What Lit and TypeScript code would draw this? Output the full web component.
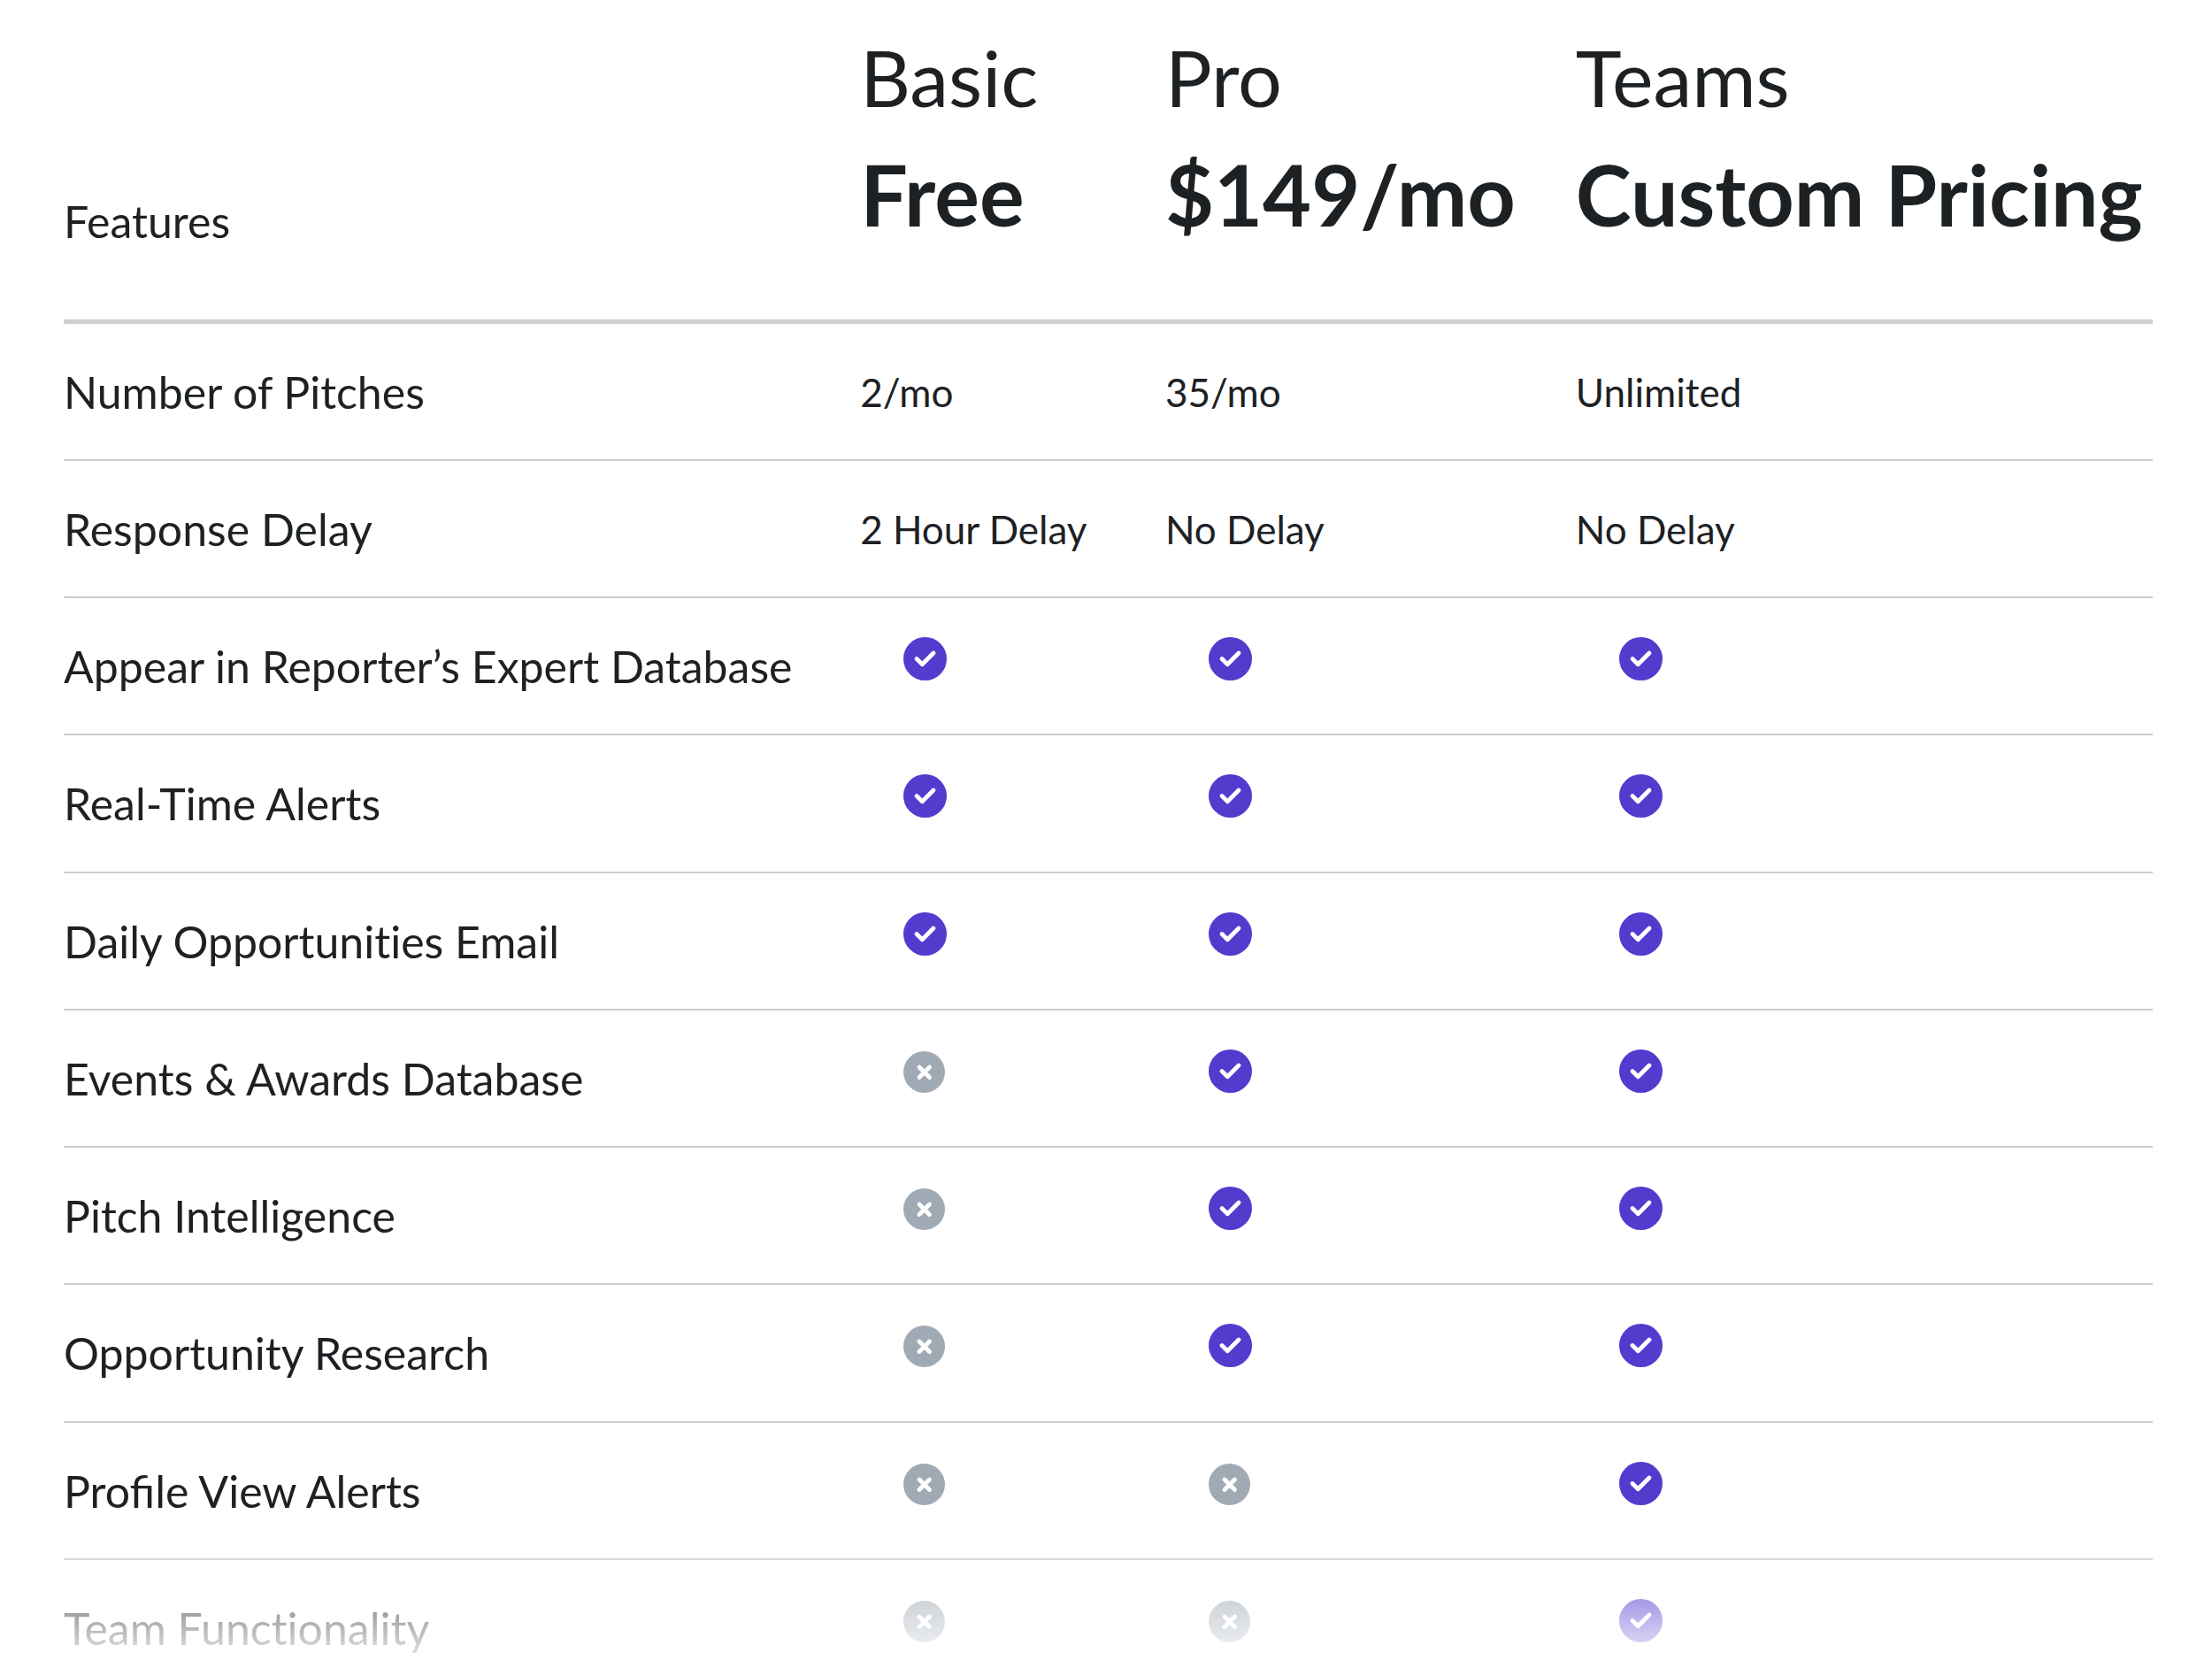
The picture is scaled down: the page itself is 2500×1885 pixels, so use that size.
import { LitElement, html, css, svg } from "lit";
import { customElement } from "lit/decorators.js";
import { classMap } from "lit/directives/class-map.js";

type Cell = string | boolean;
interface Feature {
  name: string;
  cells: Cell[];
}

const PLANS = [
  { name: "Basic", price: "Free" },
  { name: "Pro", price: "$149/mo" },
  { name: "Teams", price: "Custom Pricing" },
];

const FEATURES: Feature[] = [
  { name: "Number of Pitches", cells: ["2/mo", "35/mo", "Unlimited"] },
  { name: "Response Delay", cells: ["2 Hour Delay", "No Delay", "No Delay"] },
  { name: "Appear in Reporter’s Expert Database", cells: [true, true, true] },
  { name: "Real-Time Alerts", cells: [true, true, true] },
  { name: "Daily Opportunities Email", cells: [true, true, true] },
  { name: "Events & Awards Database", cells: [false, true, true] },
  { name: "Pitch Intelligence", cells: [false, true, true] },
  { name: "Opportunity Research", cells: [false, true, true] },
  { name: "Profile View Alerts", cells: [false, false, true] },
  { name: "Team Functionality", cells: [false, false, true] },
];

@customElement("app-root")
export class AppRoot extends LitElement {
  static styles = css`
    :host {
      display: block;
      position: relative;
      box-sizing: border-box;
      height: 100vh;
      overflow: hidden;
      padding: 0 67px 0 72px;
      background: #fff;
      color: #1d2124;
      font-family: Lato, "Liberation Sans", sans-serif;
    }
    table {
      width: 100%;
      border-collapse: separate;
      border-spacing: 0;
      table-layout: fixed;
    }
    .feature-col { width: 38%; }
    .basic-col { width: 14.6%; }
    .pro-col { width: 19.65%; }
    th, td {
      box-sizing: border-box;
      padding: 0 0 0 3px;
      text-align: left;
      font-weight: 400;
      white-space: nowrap;
    }
    thead th {
      height: 366px;
      border-bottom: 5px solid #d0d0d0;
      vertical-align: top;
      padding-top: 21px;
    }
    thead .corner {
      vertical-align: bottom;
      padding: 0 0 79px;
      font-size: 50px;
      line-height: 64px;
    }
    .plan, .price { display: block; line-height: 132px; }
    .plan { font-size: 88px; }
    .price { font-size: 95px; font-weight: 700; }
    tbody th, tbody td {
      height: 155px;
      border-bottom: 2px solid #cdcdcd;
      line-height: 64px;
    }
    tbody tr:nth-child(4n) > * { height: 156px; }
    tbody th { font-size: 50px; padding-left: 0; }
    tbody td { font-size: 44px; }
    /* Lato joins t and i by default; keep the two letters apart. */
    .split-ti { font-variant-ligatures: none; }
    .icon {
      display: block;
      width: 50px;
      height: 50px;
      margin: 0 0 16px 49px;
    }
    .fade {
      position: absolute;
      inset: auto 0 0 0;
      height: 158px;
      background: linear-gradient(rgba(255, 255, 255, 0), rgba(255, 255, 255, 0.95));
      pointer-events: none;
    }
  `;

  private icon(included: boolean) {
    return html`<svg class="icon" viewBox="0 0 50 50" role="img" aria-label=${included ? "Included" : "Not included"}>
      ${included
        ? svg`<circle cx="24.5" cy="24.5" r="24.5" fill="#533bce"/><path d="M15 24.5l6.3 6.3L34 18" fill="none" stroke="#fff" stroke-width="4.8" stroke-linecap="round" stroke-linejoin="round"/>`
        : svg`<circle cx="23.5" cy="25.5" r="23.5" fill="#a0aab4"/><path d="M18 20l11.5 11.5M29.5 20L18 31.5" stroke="#fff" stroke-width="4.8" stroke-linecap="round"/>`}
    </svg>`;
  }

  render() {
    return html`
      <table>
        <colgroup><col class="feature-col" /><col class="basic-col" /><col class="pro-col" /><col /></colgroup>
        <thead>
          <tr>
            <th class="corner" scope="col">Features</th>
            ${PLANS.map((p) => html`<th scope="col"><span class="plan">${p.name}</span><span class="price">${p.price}</span></th>`)}
          </tr>
        </thead>
        <tbody>
          ${FEATURES.map((f) => html`<tr>
            <th scope="row" class=${classMap({ "split-ti": f.name.includes("ti") })}>${f.name}</th>
            ${f.cells.map((c) => html`<td>${typeof c === "string" ? c : this.icon(c)}</td>`)}
          </tr>`)}
        </tbody>
      </table>
      <div class="fade"></div>
    `;
  }
}
